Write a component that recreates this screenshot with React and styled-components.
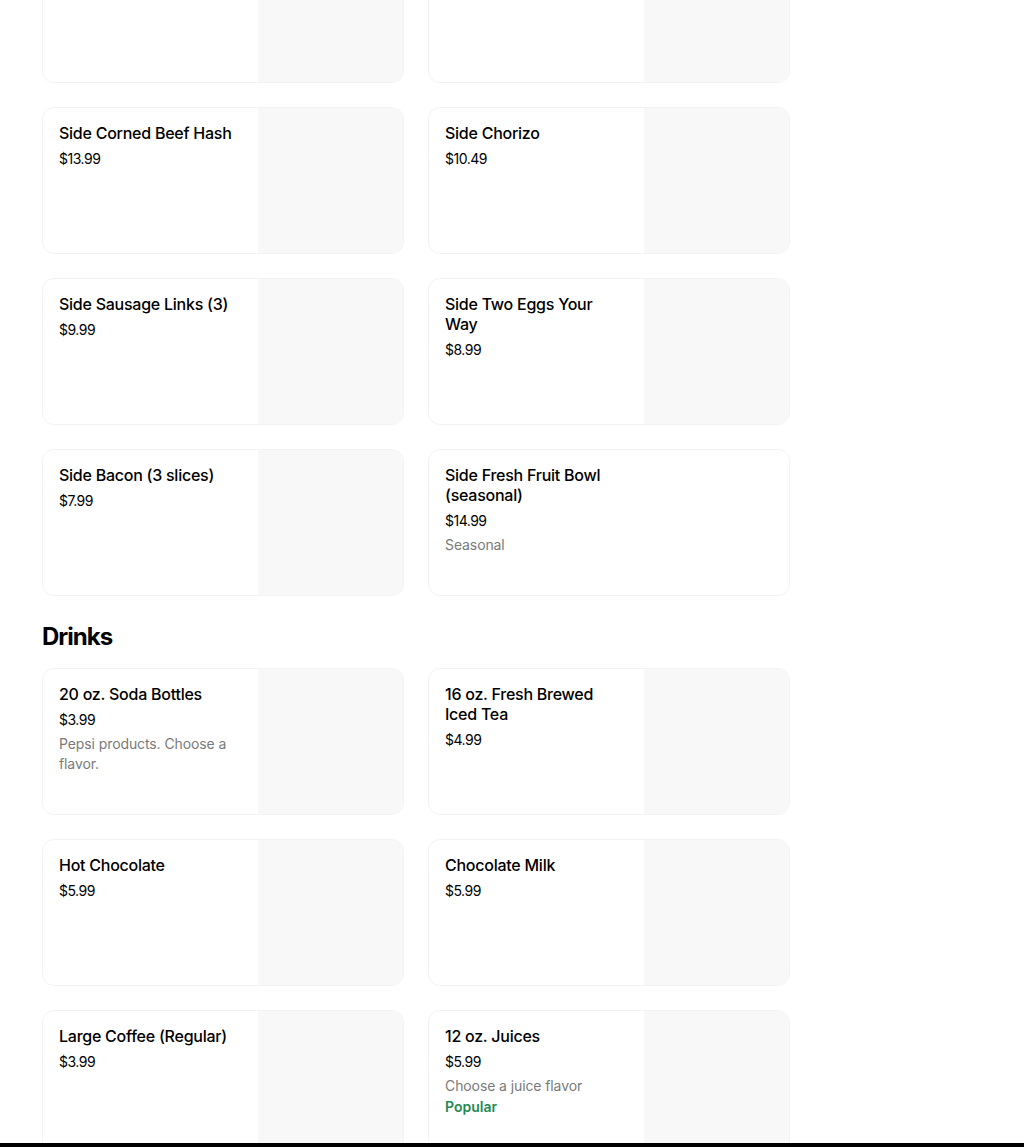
import React from 'react'
import styled, { createGlobalStyle } from 'styled-components'

const GlobalStyle = createGlobalStyle`
    html, body {
        margin: 0;
        padding: 0;
        background: #fff;
        font-family: Inter, 'Noto Sans', 'Liberation Sans', sans-serif;
        color: #000;
        overflow: hidden;
    }
`

const Page = styled.main`
    width: 748px;
    padding: 0 42px;
    margin-top: -64px;
`

const Section = styled.section`
    display: flex;
    flex-direction: column;
`

const SectionTitle = styled.h2`
    margin: 25px 0 15px;
    font-size: 24px;
    line-height: 32px;
    font-weight: 700;
    letter-spacing: -1px;
`

const Grid = styled.div`
    display: grid;
    grid-template-columns: repeat(2, 1fr);
    column-gap: 24px;
    row-gap: 24px;
`

const Card = styled.div`
    display: flex;
    height: 147px;
    box-sizing: border-box;
    border: 1px solid #f3f3f3;
    border-radius: 12px;
    overflow: hidden;
    background: #fff;
`

const Info = styled.div`
    width: 182px;
    padding: 15px 16px;
    display: flex;
    flex-direction: column;
`

const Name = styled.div`
    font-size: 16px;
    line-height: 20px;
    font-weight: 500;
    letter-spacing: -0.25px;
    margin-bottom: 6px;
`

const Price = styled.div`
    font-size: 14px;
    line-height: 20px;
    letter-spacing: -0.5px;
`

const Desc = styled.div`
    margin-top: 4px;
    font-size: 14px;
    line-height: 20px;
    color: #7a7a7a;
    letter-spacing: -0.1px;
`

const Tag = styled.div`
    margin-top: 1px;
    font-size: 14px;
    line-height: 20px;
    font-weight: 600;
    color: #1f8a52;
`

const Thumb = styled.div`
    margin-left: auto;
    width: 145px;
    flex-shrink: 0;
    background: #f8f8f8;
`

const BottomBar = styled.div`
    position: fixed;
    left: 0;
    right: 0;
    bottom: 0;
    height: 4px;
    background: #000;
`

const sides = [
    { name: 'Side Hash Browns', price: '$5.99', img: true },
    { name: 'Side Toast', price: '$3.99', img: true },
    { name: 'Side Corned Beef Hash', price: '$13.99', img: true },
    { name: 'Side Chorizo', price: '$10.49', img: true },
    { name: 'Side Sausage Links (3)', price: '$9.99', img: true },
    { name: 'Side Two Eggs Your Way', price: '$8.99', img: true },
    { name: 'Side Bacon (3 slices)', price: '$7.99', img: true },
    { name: 'Side Fresh Fruit Bowl (seasonal)', price: '$14.99', desc: 'Seasonal' },
]

const drinks = [
    { name: '20 oz. Soda Bottles', price: '$3.99', desc: 'Pepsi products. Choose a flavor.', img: true },
    { name: '16 oz. Fresh Brewed Iced Tea', price: '$4.99', img: true },
    { name: 'Hot Chocolate', price: '$5.99', img: true },
    { name: 'Chocolate Milk', price: '$5.99', img: true },
    { name: 'Large Coffee (Regular)', price: '$3.99', img: true },
    { name: '12 oz. Juices', price: '$5.99', desc: 'Choose a juice flavor', tag: 'Popular', img: true },
]

const ItemCard = ({ item }) => (
    <Card>
        <Info>
            <Name>{item.name}</Name>
            <Price>{item.price}</Price>
            {item.desc && <Desc>{item.desc}</Desc>}
            {item.tag && <Tag>{item.tag}</Tag>}
        </Info>
        {item.img && <Thumb />}
    </Card>
)

export default function App() {
    return (
        <>
            <GlobalStyle />
            <Page>
                <Section>
                    <Grid>
                        {sides.map((item) => (
                            <ItemCard key={item.name} item={item} />
                        ))}
                    </Grid>
                </Section>
                <Section>
                    <SectionTitle>Drinks</SectionTitle>
                    <Grid>
                        {drinks.map((item) => (
                            <ItemCard key={item.name} item={item} />
                        ))}
                    </Grid>
                </Section>
            </Page>
            <BottomBar />
        </>
    )
}
